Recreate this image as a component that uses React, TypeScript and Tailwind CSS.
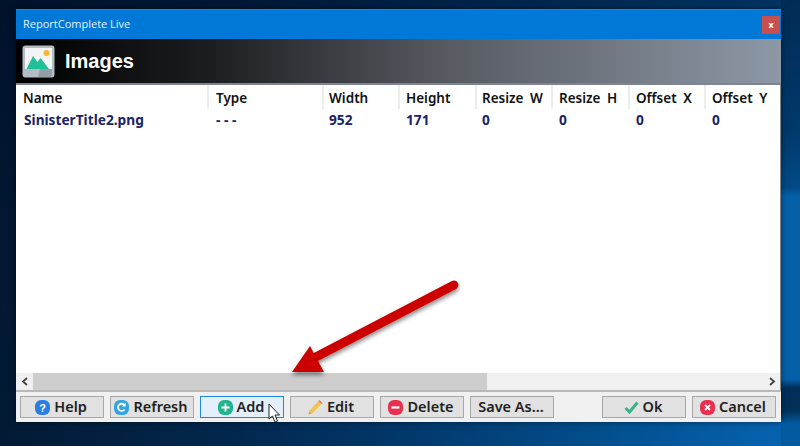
import { ReactNode } from "react";

const columns = [
  { name: "Name", width: "w-[193px]", pad: "pl-[7px]", value: "SinisterTitle2.png" },
  { name: "Type", width: "w-[115px]", pad: "pl-[7px]", value: "- - -" },
  { name: "Width", width: "w-[76px]", pad: "pl-[5px]", value: "952" },
  { name: "Height", width: "w-[77px]", pad: "pl-[6px]", value: "171" },
  { name: "Resize W", width: "w-[76px]", pad: "pl-[5px]", value: "0" },
  { name: "Resize H", width: "w-[77px]", pad: "pl-[6px]", value: "0" },
  { name: "Offset X", width: "w-[76px]", pad: "pl-[6px]", value: "0" },
  { name: "Offset Y", width: "w-[74px]", pad: "pl-[6px]", value: "0" },
];

function RoundIcon({ color, children }: { color: string; children: ReactNode }) {
  return (
    <svg width="15" height="15" viewBox="0 0 15 15" className="shrink-0">
      <rect x="0" y="0" width="15" height="15" rx="6" fill={color} />
      {children}
    </svg>
  );
}

const HelpIcon = () => (
  <RoundIcon color="#2b7de0">
    <text x="7.5" y="11.5" textAnchor="middle" fontSize="11" fontWeight="700" fontFamily="Liberation Sans" fill="#fff">?</text>
  </RoundIcon>
);

const RefreshIcon = () => (
  <RoundIcon color="#2fa6e0">
    <path d="M10.6 9.4A3.6 3.6 0 1 1 10.4 5" fill="none" stroke="#fff" strokeWidth="1.8" />
    <path d="M11.6 2.8v3.6H8z" fill="#fff" />
  </RoundIcon>
);

const AddIcon = () => (
  <RoundIcon color="#22b48c">
    <path d="M7.5 3.500v8M3.500 7.500h8" stroke="#fff" strokeWidth="1.8" />
  </RoundIcon>
);

const DeleteIcon = () => (
  <RoundIcon color="#e8304f">
    <rect x="3.5" y="6.4" width="8" height="2.2" fill="#fff" />
  </RoundIcon>
);

const CancelIcon = () => (
  <RoundIcon color="#e8304f">
    <path d="M5 5l5 5M10 5l-5 5" stroke="#fff" strokeWidth="1.8" />
  </RoundIcon>
);

const EditIcon = () => (
  <svg width="15" height="15" viewBox="0 0 15 15" className="shrink-0">
    <path d="M0.500 14.500l1-4 9-9.500 3 3-9.500 9.500z" fill="#f2c14e" />
    <path d="M0.500 14.500l0.800-3.200 2.400 2.400z" fill="#b9a98a" />
    <path d="M10.500 1l1-1 3 3-1 1z" fill="#e8705a" />
  </svg>
);

const OkIcon = () => (
  <svg width="15" height="13" viewBox="0 0 15 13" className="shrink-0">
    <path d="M1.500 7l4 4 8-9.500" fill="none" stroke="#3cb08a" strokeWidth="3" />
  </svg>
);

function ToolButton({ icon, label, active }: { icon?: ReactNode; label: string; active?: boolean }) {
  return (
    <button
      className={
        active
          ? "w-[84px] h-[22px] flex items-center justify-center gap-[4px] pr-[2px] border border-[#1e88e0] bg-[#e3f0fb] text-[14.5px] font-semibold text-[#222]"
          : "w-[84px] h-[22px] flex items-center justify-center gap-[4px] pr-[2px] border border-[#a8a8a8] bg-[#e1e1e1] text-[14.5px] font-semibold text-[#222]"
      }
    >
      {icon}
      <span>{label}</span>
    </button>
  );
}

export default function App() {
  return (
    <div className="relative w-[800px] h-[446px] overflow-hidden bg-[linear-gradient(180deg,rgba(0,12,35,0.55)_0%,rgba(0,12,35,0.15)_60%,rgba(0,0,0,0)_100%),linear-gradient(90deg,#021a35_0%,#02284f_30%,#02386b_50%,#024f8e_75%,#0765b3_100%)] pl-[16px] pt-[9px] font-['Noto_Sans',sans-serif]">
      {/* lighter wallpaper band on the right edge */}
      <div className="absolute right-0 top-0 w-[19px] h-full bg-[linear-gradient(180deg,#012c55_0%,#01396c_30%,#024a85_42%,#0560a8_44%,#0560a8_85%,#012f59_87%,#013058_92%,#045a9f_95%,#045a9f_100%)]" />

      <div className="relative w-[765px] h-[413px] flex flex-col bg-white border-t border-[#1a8ae0] shadow-[0_0_6px_rgba(0,0,0,0.5)]">
        {/* title bar */}
        <div className="h-[29px] shrink-0 flex items-center justify-between bg-[#0078d7] pl-[7px] pr-[1px]">
          <span className="text-[11px] text-[#e6f2fb] font-['Open_Sans',sans-serif]">ReportComplete Live</span>
          <div className="w-[18px] h-[18px] flex items-center justify-center bg-[#c74f50] text-[9px] font-bold text-white">x</div>
        </div>

        {/* header */}
        <div className="h-[46px] shrink-0 flex items-center gap-[10px] pl-[6px] bg-[linear-gradient(90deg,#000_0%,#1c1d20_25%,#55585f_55%,#8d98a6_100%)] border-b-2 border-[#7d8590]">
          <svg width="33" height="33" viewBox="0 0 33 33">
            <rect x="0.5" y="0.5" width="32" height="32" rx="3" fill="#b4bcc4" />
            <path d="M3 3h27v21H3z" fill="#f4f4f4" />
            <path d="M16 32l2-8h12v5a3 3 0 0 1-3 3z" fill="#959ea8" />
            <circle cx="24.500" cy="8" r="3" fill="#f5b82e" />
            <path d="M4.500 24L11 11l4.500 6 3-4 8.500 11z" fill="#1fbf98" />
          </svg>
          <span className="text-[20px] font-bold text-white font-['Liberation_Sans',sans-serif]">Images</span>
        </div>

        {/* table */}
        <div className="flex-1 flex flex-col min-h-0 bg-white border-r border-[#808890]">
          <div className="flex h-[24px] shrink-0 items-center">
            {columns.map((c) => (
              <div key={c.name} className={`${c.width} ${c.pad} h-full flex items-center pt-[3px] border-r-2 border-[#ececec] last:border-r-0 text-[13.5px] font-semibold [word-spacing:3px] text-[#111] whitespace-nowrap`}>
                {c.name}
              </div>
            ))}
          </div>
          <div className="flex h-[20px] shrink-0 items-center pt-[3px]">
            {columns.map((c) => (
              <div key={c.name} className={`${c.width} ${c.pad} text-[13.7px] font-bold text-[#1b2268] whitespace-nowrap first:pl-[8px]`}>
                {c.value}
              </div>
            ))}
          </div>
          <div className="flex-1" />
          {/* horizontal scrollbar */}
          <div className="h-[17px] shrink-0 flex items-center bg-[#f0f0f0]">
            <div className="w-[17px] flex justify-center">
              <svg width="8" height="9" viewBox="0 0 8 9"><path d="M6 1L2 4.500l4 3.500" fill="none" stroke="#444" strokeWidth="1.8" /></svg>
            </div>
            <div className="w-[454px] h-full bg-[#cdcdcd]" />
            <div className="flex-1" />
            <div className="w-[17px] flex justify-center">
              <svg width="8" height="9" viewBox="0 0 8 9"><path d="M2 1l4 3.500L2 8" fill="none" stroke="#444" strokeWidth="1.8" /></svg>
            </div>
          </div>
        </div>

        {/* footer */}
        <div className="h-[32px] shrink-0 flex items-center justify-between pl-[4px] pr-[5px] bg-[#f0f0f0] border-t-2 border-[#b8b8b8]">
          <div className="flex gap-[6px]">
            <ToolButton icon={<HelpIcon />} label="Help" />
            <ToolButton icon={<RefreshIcon />} label="Refresh" />
            <ToolButton icon={<AddIcon />} label="Add" active />
            <ToolButton icon={<EditIcon />} label="Edit" />
            <ToolButton icon={<DeleteIcon />} label="Delete" />
            <ToolButton label="Save As..." />
          </div>
          <div className="flex gap-[6px]">
            <ToolButton icon={<OkIcon />} label="Ok" />
            <ToolButton icon={<CancelIcon />} label="Cancel" />
          </div>
        </div>
      </div>

      {/* annotation arrow */}
      <svg className="absolute left-[285px] top-[275px]" width="185" height="110" viewBox="285 275 185 110">
        <defs>
          <filter id="arrowShadow" x="-20%" y="-20%" width="140%" height="140%">
            <feDropShadow dx="0" dy="3" stdDeviation="2" floodColor="#000" floodOpacity="0.45" />
          </filter>
        </defs>
        <g filter="url(#arrowShadow)" fill="#cc0000">
          <path d="M454 285L312 359" stroke="#cc0000" strokeWidth="9" strokeLinecap="round" fill="none" />
          <path d="M292 372L310 346L324 372Z" />
        </g>
      </svg>

      {/* mouse cursor */}
      <svg className="absolute left-[268px] top-[403px]" width="13" height="20" viewBox="0 0 13 20">
        <path d="M1 1v15l3.500-3 2.500 6 2.500-1-2.500-6h4.500z" fill="#fff" stroke="#222" strokeWidth="1" />
      </svg>
    </div>
  );
}
